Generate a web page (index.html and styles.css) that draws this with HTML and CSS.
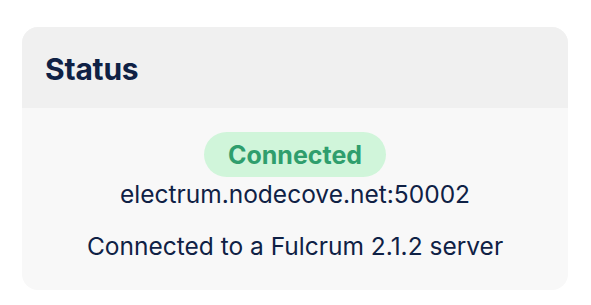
FILE: index.html
```html
<!DOCTYPE html>
<html lang="en">
<head>
<meta charset="UTF-8" />
<meta name="viewport" content="width=device-width, initial-scale=1" />
<title>Status</title>
<link rel="stylesheet" href="styles.css">
</head>
<body>

<div class="card">
  <div class="card-header">
    <h2 class="card-title">Status</h2>
  </div>
  <div class="card-body">
    <span class="badge">Connected</span>
    <div class="server-host">electrum.nodecove.net:50002</div>
    <div class="server-info">Connected to a Fulcrum 2.1.2 server</div>
  </div>
</div>

</body>
</html>
```

FILE: styles.css
```css
/* status card */
body {
  margin: 0;
  padding: 27px 23px 15px 22px;
  background: #ffffff;
  font-family: Inter, 'Noto Sans', sans-serif;
  color: #0f2145;
}
.card {
  border-radius: 16px;
  overflow: hidden;
  background: #f8f8f8;
}
.card-header {
  height: 81px;
  background: #f0f0f0;
  display: flex;
  align-items: center;
  padding: 0 23px;
}
.card-title {
  margin: 0;
  font-size: 30px;
  font-weight: 700;
  letter-spacing: -0.2px;
  padding-top: 2px;
}
.card-body {
  display: flex;
  flex-direction: column;
  align-items: center;
  padding: 24px 20px 29px;
}
.badge {
  display: inline-flex;
  align-items: center;
  justify-content: center;
  height: 45px;
  padding: 0 24px;
  border-radius: 23px;
  background: #d0f5da;
  color: #2f9e6d;
  font-size: 25px;
  font-weight: 700;
}
.server-host {
  font-size: 24.5px;
  line-height: 30px;
  margin-top: 2px;
}
.server-info {
  font-size: 24.5px;
  line-height: 30px;
  margin-top: 22px;
}
```
